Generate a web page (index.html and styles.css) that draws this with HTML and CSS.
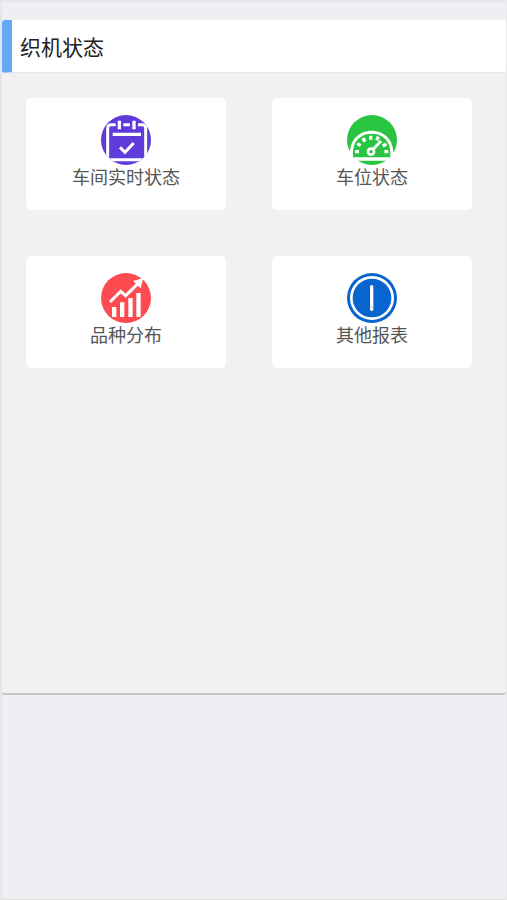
FILE: index.html
```html
<!DOCTYPE html>
<html lang="zh-CN">
<head>
  <meta charset="UTF-8">
  <meta name="viewport" content="width=device-width, initial-scale=1">
  <title>织机状态</title>
  <link rel="stylesheet" href="styles.css">
</head>
<body>
  <section class="panel">
    <h2 class="panel-title">织机状态</h2>
    <nav class="menu">
      <a class="menu-item" href="#workshop">
        <svg class="icon" viewBox="0 0 150 150" aria-hidden="true">
          <clipPath id="round"><circle cx="75" cy="75" r="75"/></clipPath>
          <circle cx="75" cy="75" r="75" fill="#5f3bdc"/>
          <g clip-path="url(#round)" fill="none" stroke="#fff" stroke-width="9">
            <path d="M44 29H30Q20 29 20 39V134H134V39Q134 29 124 29H111M67 29H87"/>
            <path d="M55 17V43M99 17V43M35 58H120" stroke-width="10"/>
            <path d="M57 97L72 112L98 84"/>
          </g>
        </svg>
        <span>车间实时状态</span>
      </a>
      <a class="menu-item" href="#position">
        <svg class="icon" viewBox="0 0 150 150" aria-hidden="true">
          <circle cx="75" cy="75" r="75" fill="#29c440"/>
          <path d="M0 137V112H9C9 74 37 47 74 47S139 74 139 112H150V137Z" fill="#fff"/>
          <path d="M18 127V112C18 78 42 56 74 56S130 78 130 112V127Z" fill="#29c440"/>
          <g fill="none" stroke="#fff">
            <path d="M24 110H36M31 86L41 92M48 69L54 80M71 62V74M94 65L89 76M118 87L107 93M112 110H124" stroke-width="10"/>
            <circle cx="72" cy="110" r="9" stroke-width="8"/>
            <path d="M77 104L102 78" stroke-width="9"/>
          </g>
        </svg>
        <span>车位状态</span>
      </a>
      <a class="menu-item" href="#variety">
        <svg class="icon" viewBox="0 0 150 150" aria-hidden="true">
          <circle cx="75" cy="75" r="75" fill="#fd4b50"/>
          <path d="M33 102H46V132H33ZM57 88H70V132H57ZM82 75H95V132H82ZM106 60H119V132H106Z" fill="#fff"/>
          <path d="M27 87L59 55L74 68L114 29" fill="none" stroke="#fff" stroke-width="9"/>
          <path d="M127 15L96 24L119 46Z" fill="#fff"/>
        </svg>
        <span>品种分布</span>
      </a>
      <a class="menu-item" href="#reports">
        <svg class="icon" viewBox="0 0 150 150" aria-hidden="true">
          <circle cx="75" cy="75" r="75" fill="#0864ce"/>
          <circle cx="75" cy="75" r="62" fill="none" stroke="#fff" stroke-width="8"/>
          <rect x="69" y="36" width="10" height="78" rx="5" fill="#fff"/>
          <path d="M69 102H79" stroke="#8ab7e8" stroke-width="2"/>
        </svg>
        <span>其他报表</span>
      </a>
    </nav>
  </section>
</body>
</html>
```
FILE: styles.css
```css
* {
  box-sizing: border-box;
}
body {
  margin: 0;
  min-height: 100vh;
  padding-top: 18px;
  background-color: #efeef3;
  border: 2px solid #e6e6e9;
  border-right: 1px solid #eaeaed;
  border-bottom: 1px solid #e3e3e3;
  font-family: "Noto Sans CJK SC", sans-serif;
}
.panel {
  min-height: 75vh;
  background-color: #f1f1f1;
  border-bottom: 2px solid #c6c6c8;
  border-radius: 3px;
}
.panel-title {
  margin: 0;
  padding: 0 8px;
  background-color: #fff;
  border-left: 10px solid #62aaf8;
  border-bottom: 1px solid #e6e6e6;
  border-radius: 3px;
  color: #222;
  font-size: 21px;
  font-weight: 400;
  line-height: 52px;
}
.menu {
  display: grid;
  grid-template-columns: 1fr 1fr;
  gap: 46px;
  padding: 25px 34px 25px 24px;
}
.menu-item {
  display: flex;
  flex-direction: column;
  align-items: center;
  padding: 17px 0 23px;
  background-color: #fff;
  border-radius: 5px;
  color: #555;
  font-size: 18px;
  line-height: 22px;
  text-decoration: none;
}
.icon {
  width: 50px;
  height: 50px;
}
```
